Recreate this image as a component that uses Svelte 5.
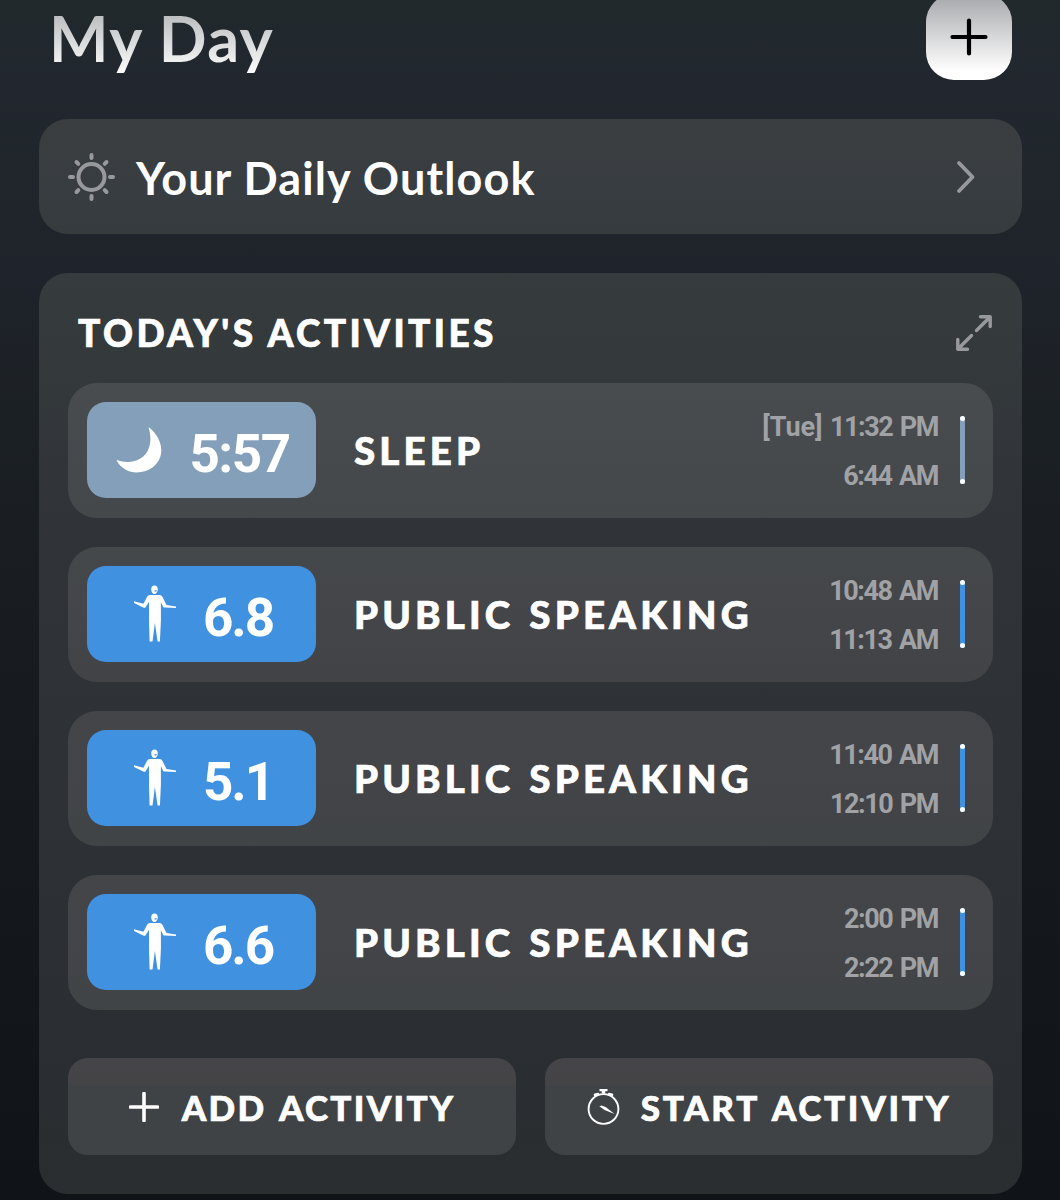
<script lang="ts">
    type Activity = {
        kind: 'sleep' | 'speaking';
        score: string;
        name: string;
        day?: string;
        start: string;
        end: string;
    };

    const activities: Activity[] = [
        { kind: 'sleep', score: '5:57', name: 'SLEEP', day: '[Tue]', start: '11:32 PM', end: '6:44 AM' },
        { kind: 'speaking', score: '6.8', name: 'PUBLIC SPEAKING', start: '10:48 AM', end: '11:13 AM' },
        { kind: 'speaking', score: '5.1', name: 'PUBLIC SPEAKING', start: '11:40 AM', end: '12:10 PM' },
        { kind: 'speaking', score: '6.6', name: 'PUBLIC SPEAKING', start: '2:00 PM', end: '2:22 PM' },
    ];
</script>

<main class="screen">
    <header class="top">
        <h1 class="title">My Day</h1>
        <button class="add" aria-label="Add">
            <svg width="38" height="38" viewBox="0 0 38 38" fill="none">
                <path d="M19 2.5v33M2.5 19h33" stroke="#000" stroke-width="4.2" stroke-linecap="round"/>
            </svg>
        </button>
    </header>

    <button class="outlook">
        <svg width="50" height="50" viewBox="0 0 50 50" fill="none" stroke="#98999c" stroke-width="4" stroke-linecap="round">
            <circle cx="25.500" cy="25" r="13"/>
            <path d="M25.500 3v3M25.500 44v3M4 25h3M44 25h3M10.500 10l1.800 1.800M38.700 38.200l1.800 1.800M10.500 40l1.800-1.800M38.700 11.800l1.800-1.800"/>
        </svg>
        <span class="outlook-label">Your Daily Outlook</span>
        <svg class="chevron" width="20" height="34" viewBox="0 0 20 34" fill="none">
            <path d="M3 3l13.500 14L3 31" stroke="#98999c" stroke-width="3.800" stroke-linecap="round" stroke-linejoin="round"/>
        </svg>
    </button>

    <section class="panel">
        <div class="panel-head">
            <h2 class="panel-title">TODAY'S ACTIVITIES</h2>
            <button class="expand" aria-label="Expand">
                <svg width="38" height="38" viewBox="0 0 38 38" fill="none" stroke="#98999c" stroke-width="3.400" stroke-linecap="round" stroke-linejoin="round">
                    <path d="M21.500 16.500L35 3M25.500 2.800h9.700v9.700M16.500 21.500L3 35M2.800 25.500v9.700h9.700"/>
                </svg>
            </button>
        </div>

        <div class="rows">
            {#each activities as a}
                <div class="row">
                    <div class="badge {a.kind}">
                        {#if a.kind === 'sleep'}
                            <svg width="46" height="46" viewBox="0 0 46 46">
                                <path d="M32.500 0C48 12 49.500 31 36.500 40.500C24 49 7 46.500 0.500 33C15 38 28 33 32.500 22C35.500 14.500 34.500 7 32.500 0z" fill="#fff"/>
                            </svg>
                        {:else}
                            <svg width="42" height="58" viewBox="0 0 42 58">
                                <path d="M20.500 0.500c2 0 3.300 1.400 3.300 3.700 0 2.600-1.300 4.800-3.300 4.800s-3.300-2.200-3.300-4.800c0-2.300 1.300-3.700 3.300-3.700z" fill="#fff"/>
                                <path d="M20.500 5.200h2.400c-.2 1.400-1 1.900-2.400 1z" fill="#4191e1"/>
                                <path d="M16 10h9.500c1.500 0 2.400.8 3 2l4 8 9.500 1.400v1.500L31 22.600c-1 0-1.600-.4-2-1.200l-2.100-4.200V36l-1 20.500h-2.300L20.900 38l-2.400 18.500h-2.900L15 36V16.800L11.800 22c-.5.800-1.200 1-2.100.7L0 17.900v-1.600l9.400 2.500L13 12c.6-1.300 1.600-2 3-2z" fill="#fff"/>
                            </svg>
                        {/if}
                        <span class="score">{a.score}</span>
                    </div>
                    <span class="name">{a.name}</span>
                    <div class="times">
                        <span>{#if a.day}<span class="day">{a.day}</span>{' '}{/if}{a.start}</span>
                        <span>{a.end}</span>
                    </div>
                    <div class="span {a.kind}"></div>
                </div>
            {/each}
        </div>

        <div class="actions">
            <button class="action">
                <svg width="30" height="30" viewBox="0 0 30 30" fill="none">
                    <path d="M15 1.500v27M1.500 15h27" stroke="#fff" stroke-width="3.600" stroke-linecap="round"/>
                </svg>
                <span>ADD ACTIVITY</span>
            </button>
            <button class="action start">
                <svg width="33" height="36" viewBox="0 0 33 36">
                    <circle cx="16.500" cy="20" r="14.900" fill="none" stroke="#fff" stroke-width="1.900"/>
                    <path d="M12.500 0h8v2.200h-2.300v2.600h-3.400V2.200h-2.300z" fill="#fff"/>
                    <path d="M8 5.800l3-.8M25 5.800l-3-.8" stroke="#fff" stroke-width="2.600" stroke-linecap="round"/>
                    <path d="M12.300 17.200l2.400-.6 4.300 1.600L27.500 25l-10-4z" fill="#fff"/>
                </svg>
                <span>START ACTIVITY</span>
            </button>
        </div>
    </section>
</main>

<style>
    :global(body) {
        margin: 0;
        background: #101418;
    }
    .screen {
        box-sizing: border-box;
        height: 1200px;
        padding: 0 38px 0 39px;
        overflow: hidden;
        color: #fff;
        font-family: Lato, sans-serif;
        background: linear-gradient(180deg, #21292c 0, #22272f 85px, #20262c 180px, #1f232b 270px, #1b2024 420px, #171b20 700px, #101418 1200px);
    }
    button {
        padding: 0;
        border: none;
        color: inherit;
        font: inherit;
        cursor: pointer;
    }
    svg { display: block; flex-shrink: 0; }

    .top {
        display: flex;
        align-items: flex-start;
        justify-content: space-between;
        height: 119px;
        padding: 0 10px 0 10px;
    }
    .title {
        margin: 0;
        font-size: 63px;
        font-weight: 700;
        line-height: 76px;
        letter-spacing: 1.3px;
        background: linear-gradient(180deg, #b8babc 12px, #fdfdfd 74px);
        background-clip: text;
        color: transparent;
    }
    .add {
        display: flex;
        align-items: center;
        justify-content: center;
        width: 86px;
        height: 86px;
        margin-top: -6px;
        border-radius: 28px;
        background: linear-gradient(180deg, #a5a6aa, #fff 90%);
    }

    .outlook {
        box-sizing: border-box;
        display: flex;
        align-items: center;
        width: 100%;
        height: 115px;
        padding: 0 46px 0 27px;
        border-radius: 29px;
        background: linear-gradient(180deg, #3a3e40, #383d41 60%, #363b3e);
    }
    .outlook-label {
        flex: 1;
        margin-left: 20px;
        padding-top: 2px;
        text-align: left;
        font-size: 45px;
        font-weight: 700;
        line-height: 56px;
        letter-spacing: 1.1px;
    }

    .panel {
        box-sizing: border-box;
        height: 921px;
        margin-top: 39px;
        padding: 0 29px;
        border-radius: 29px;
        background: linear-gradient(180deg, #363b3d, #33383b 120px, #303338 260px, #2d3034 600px, #2a2d31 800px, #2a2e30);
    }
    .panel-head {
        display: flex;
        align-items: center;
        justify-content: space-between;
        height: 110px;
        padding: 14px 0 5px 10px;
        box-sizing: border-box;
    }
    .panel-title {
        margin: 0;
        padding-top: 1px;
        font-size: 37px;
        font-weight: 900;
        line-height: 44px;
        letter-spacing: 3.4px;
    }
    .panel-title,
    .name,
    .action span { -webkit-text-stroke: 0.7px #fff; }
    .expand { background: none; }

    .rows {
        display: flex;
        flex-direction: column;
        gap: 29px;
    }
    .row {
        box-sizing: border-box;
        display: flex;
        align-items: center;
        height: 135px;
        padding: 0 28px 1px 19px;
        border-radius: 29px;
        background: linear-gradient(180deg, #494c4f, #45484b);
    }
    .row:nth-child(n + 2) { background: linear-gradient(180deg, #45484a, #424347); }
    .row:nth-child(n + 3) { background: linear-gradient(180deg, #444549, #414446); }
    .badge {
        box-sizing: border-box;
        display: flex;
        align-items: center;
        justify-content: center;
        gap: 27px;
        width: 229px;
        height: 96px;
        padding-left: 3px;
        border-radius: 19px;
    }
    .badge.sleep { background: #839fb9; }
    .badge.speaking { padding-left: 4px; background: #4191e1; }
    .score {
        padding-top: 7px;
        font-family: Roboto, sans-serif;
        font-size: 53px;
        font-weight: 700;
        line-height: 60px;
        letter-spacing: -1.5px;
    }
    .speaking .score { letter-spacing: -2px; }
    .name {
        flex: 1;
        margin-left: 38px;
        font-size: 38.5px;
        font-weight: 900;
        line-height: 46px;
        letter-spacing: 4.1px;
        word-spacing: 2px;
        white-space: nowrap;
    }
    .times {
        display: flex;
        flex-direction: column;
        align-items: flex-end;
        padding-top: 4px;
        font-family: Roboto, sans-serif;
        font-size: 27px;
        font-weight: 700;
        line-height: 49px;
        letter-spacing: -1.4px;
        word-spacing: 2px;
        color: #a1a2a5;
        white-space: nowrap;
    }
    .day { letter-spacing: 0; }
    .span {
        display: flex;
        flex-direction: column;
        justify-content: space-between;
        width: 5px;
        height: 68px;
        margin-left: 22px;
        border-radius: 3px;
    }
    .span.sleep { background: #839fb9; }
    .span.speaking { background: #4191e1; }
    .span::before,
    .span::after {
        content: '';
        height: 5px;
        border-radius: 50%;
        background: #fff;
    }

    .actions {
        display: grid;
        grid-template-columns: 1fr 1fr;
        gap: 29px;
        margin-top: 48px;
    }
    .action {
        display: flex;
        align-items: center;
        justify-content: center;
        gap: 23px;
        height: 97px;
        border-radius: 20px;
        font-size: 35px;
        font-weight: 900;
        letter-spacing: 2.3px;
        word-spacing: 3px;
        white-space: nowrap;
        background: linear-gradient(180deg, #454549, #444346 27%, #404346 29%, #404346);
    }
    .action.start {
        gap: 21px;
        letter-spacing: 2.7px;
    }
</style>
